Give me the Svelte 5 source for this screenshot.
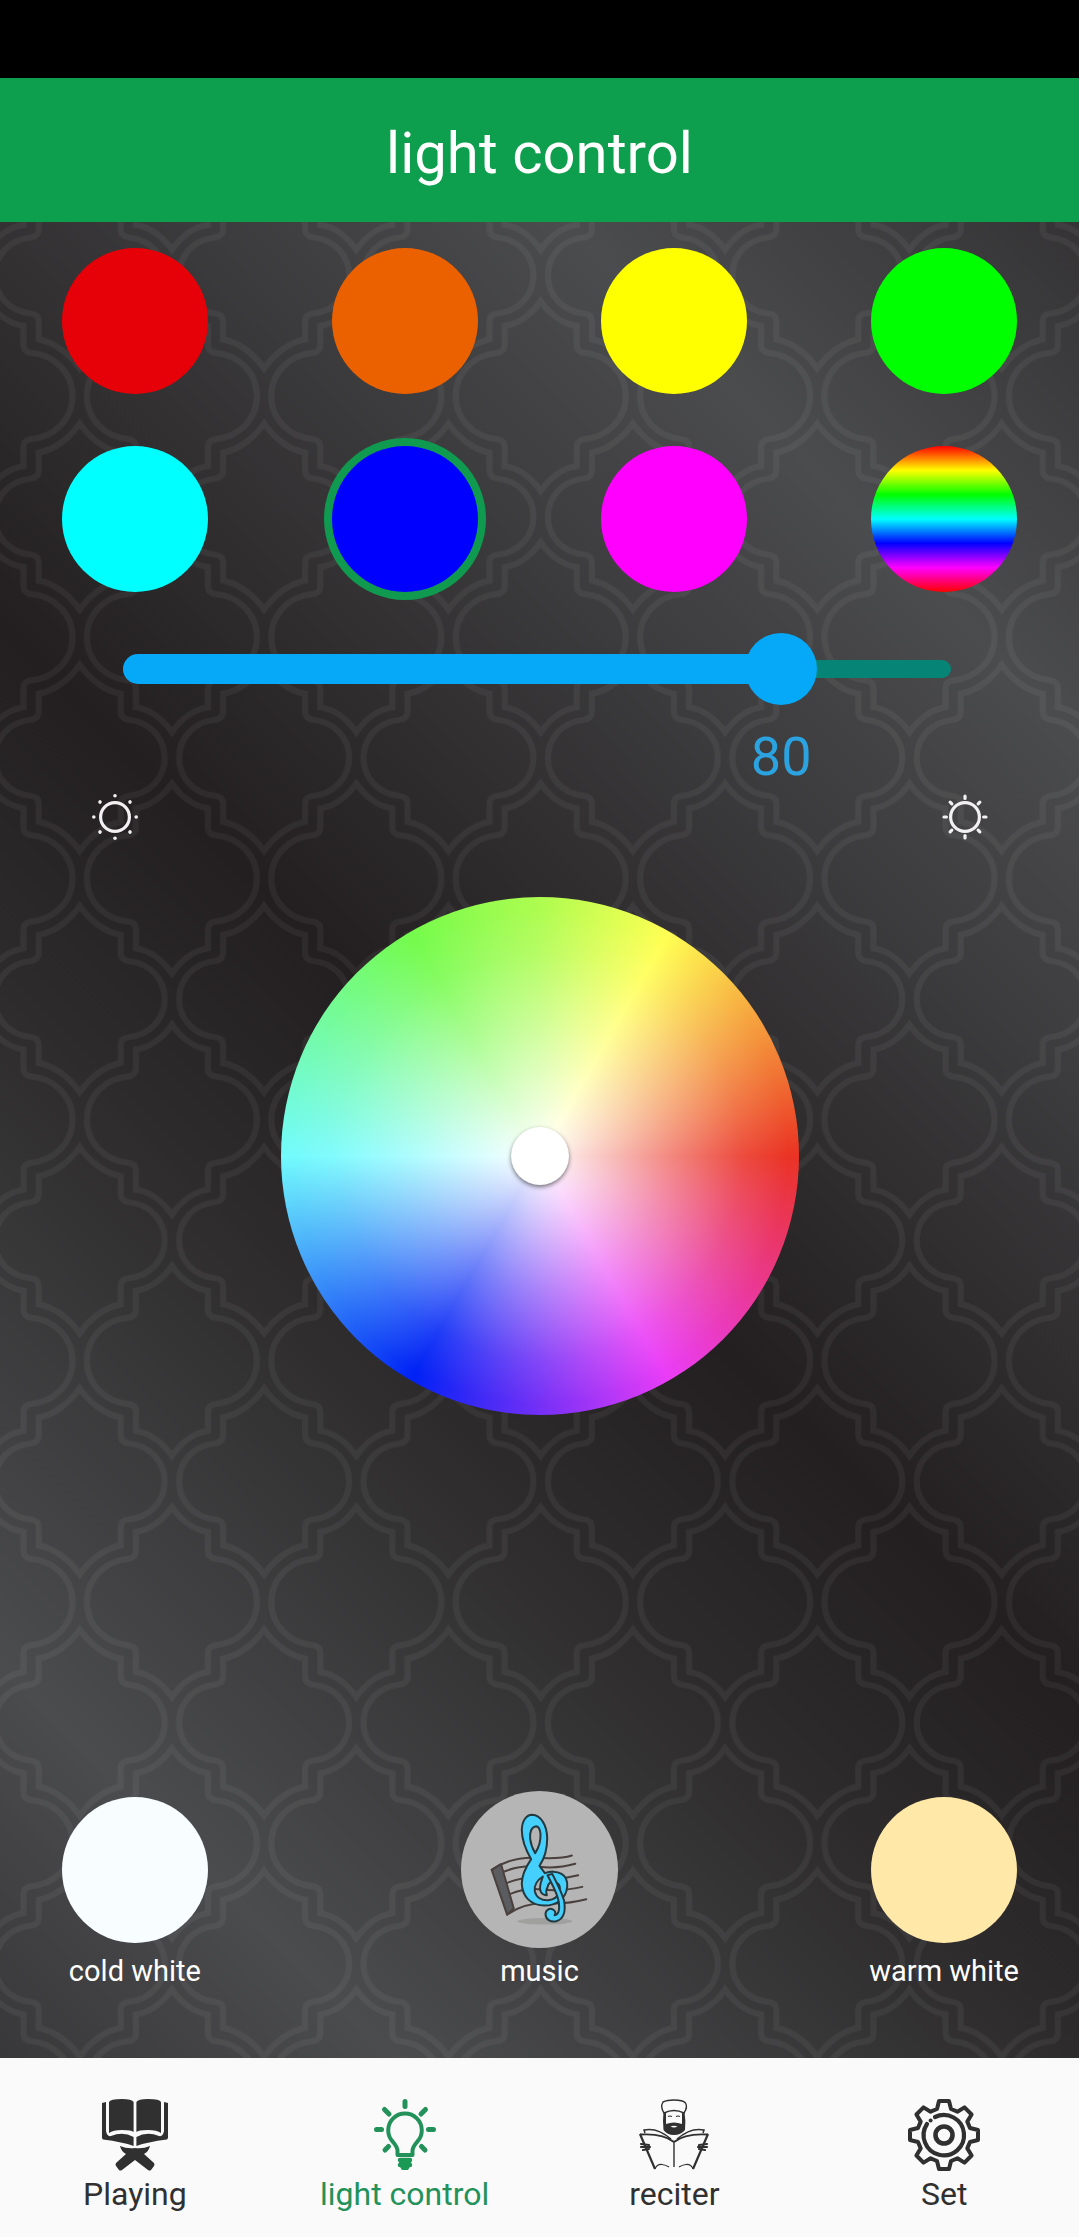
<script lang="ts">
  const colors = [
    { name: 'red', value: '#e60008' },
    { name: 'orange', value: '#eb6100' },
    { name: 'yellow', value: '#ffff00' },
    { name: 'green', value: '#00ff00' },
    { name: 'cyan', value: '#00ffff' },
    { name: 'blue', value: '#0000ff' },
    { name: 'magenta', value: '#ff00ff' },
    { name: 'rainbow', value: 'linear-gradient(#f00, #ff0, #0f0, #0ff, #00f, #f0f, #f00)' }
  ];

  let selected = $state('blue');
  let brightness = $state(80);

  const rays = [0, 45, 90, 135, 180, 225, 270, 315];

  // closed outline of the settings gear, one tooth per ray
  function gearPath() {
    const tooth = [[-7, -26], [-5, -34], [5, -34], [7, -26]];
    const points = rays.flatMap((deg) => {
      const a = (deg * Math.PI) / 180;
      return tooth.map(([x, y]) => {
        const px = 36 + x * Math.cos(a) - y * Math.sin(a);
        const py = 36 + x * Math.sin(a) + y * Math.cos(a);
        return `${px.toFixed(1)} ${py.toFixed(1)}`;
      });
    });
    return `M${points.join('L')}Z`;
  }
</script>

<div class="screen">
  <div class="status-bar"></div>

  <header>
    <h1>light control</h1>
  </header>

  <main>
    <svg class="backdrop" viewBox="0 0 1079 1836" preserveAspectRatio="xMidYMid slice" aria-hidden="true">
      <defs>
        <linearGradient id="shade" gradientUnits="userSpaceOnUse" x1="-1150" y1="1150" x2="750" y2="-750">
          <stop offset="0" stop-color="#231f20" />
          <stop offset="0.226" stop-color="#4b4c4e" />
          <stop offset="0.406" stop-color="#2d2b2c" />
          <stop offset="0.5" stop-color="#231f20" />
          <stop offset="0.754" stop-color="#4b4c4e" />
          <stop offset="1" stop-color="#231f20" />
        </linearGradient>
        <path id="tile-a" d="M0-95C9-82 22-72 36-70V-51Q36-44 44-43C66-41 85-24 85 0C85 24 66 41 44 43Q36 44 36 51V70C22 72 9 82 0 95C-9 82-22 72-36 70V51Q-36 44-44 43C-66 41-85 24-85 0C-85-24-66-41-44-43Q-36-44-36-51V-70C-22-72-9-82 0-95Z" />
        <path id="tile-b" d="M0-93C9-80 24-67 41-64V-46Q41-39 49-38C70-36 85-20 85 0C85 20 70 36 49 38Q41 39 41 46V64C24 67 9 80 0 93C-9 80-24 67-41 64V46Q-41 39-49 38C-70 36-85 20-85 0C-85-20-70-36-49-38Q-41-39-41-46V-64C-24-67-9-80 0-93Z" />
        <pattern id="lattice" patternUnits="userSpaceOnUse" x="79.7" y="53.4" width="184.4" height="241.2">
          <g fill="none" stroke="#fff" stroke-opacity="0.05" stroke-width="6">
            <use href="#tile-a" x="92.2" y="120.6" />
            <use href="#tile-b" x="0" y="0" />
            <use href="#tile-b" x="184.4" y="0" />
            <use href="#tile-b" x="0" y="241.2" />
            <use href="#tile-b" x="184.4" y="241.2" />
          </g>
        </pattern>
      </defs>
      <rect width="1079" height="1836" fill="url(#shade)" />
      <rect width="1079" height="1836" fill="url(#lattice)" />
    </svg>

    <section class="swatches">
      {#each colors as color (color.name)}
        <button
          class="swatch"
          class:selected={selected === color.name}
          style="background: {color.value}"
          aria-label={color.name}
          onclick={() => (selected = color.name)}
        ></button>
      {/each}
    </section>

    <section class="brightness">
      <div class="slider">
        <div class="track"></div>
        <div class="fill-area"><div class="fill" style="width: {brightness}%"></div></div>
        <input type="range" min="0" max="100" aria-label="brightness" bind:value={brightness} />
      </div>
      <div class="value-area">
        <div class="value" style="width: {brightness}%"><output>{brightness}</output></div>
      </div>
    </section>

    <div class="suns">
      <svg viewBox="0 0 48 48" aria-hidden="true">
        <circle cx="24" cy="24" r="14.4" fill="none" stroke="#f2f0f2" stroke-width="3.2" />
        {#each rays as deg}
          <circle cx="24" cy="2.8" r="1.8" fill="#f2f0f2" transform="rotate({deg} 24 24)" />
        {/each}
      </svg>
      <svg viewBox="0 0 48 48" aria-hidden="true">
        <g fill="none" stroke="#f2f0f2" stroke-width="3.2" stroke-linecap="round">
          <circle cx="24" cy="24" r="14.4" />
          {#each rays as deg}
            <path d="M24 5.4V3" transform="rotate({deg} 24 24)" />
          {/each}
        </g>
      </svg>
    </div>

    <div class="wheel">
      <button class="knob" aria-label="pick color"></button>
    </div>

    <section class="presets">
      <button class="preset">
        <span class="disc"><span class="dot cold"></span></span>
        <span>cold white</span>
      </button>
      <button class="preset">
        <span class="disc">
          <svg viewBox="65 62 470 470" aria-hidden="true">
            <circle cx="300" cy="297" r="235" fill="#b5b5b5" />
            <ellipse cx="316" cy="452" rx="82" ry="10" fill="#a0a09f" />
            <g fill="none" stroke="#4a413e" stroke-width="6" stroke-linecap="round">
              <path d="M157 298Q215 258 290 262T397 255" />
              <path d="M195 303Q245 283 300 289T407 280" />
              <path d="M203 337Q250 317 305 323T416 314" />
              <path d="M213 370Q260 350 310 357T428 349" />
              <path d="M203 432Q255 395 320 398T440 386" />
              <path d="M157 298L185 281L223 414L203 432Z" fill="#5b5c5f" stroke-linejoin="round" />
            </g>
            <!-- treble clef: body with its two holes, then the stem and hook over it -->
            <g fill="#45cffc" stroke="#23393f" stroke-width="6" stroke-linecap="round" stroke-linejoin="round">
              <path
                fill-rule="evenodd"
                d="M275 266C254 230 247 200 247 178C248 150 261 133 278 133C304 134 323 165 323 205C323 245 312 268 300 286L316 308C330 302 352 301 366 310C380 318 384 334 383 348C380 385 350 405 315 405C275 404 249 380 247 340C247 310 260 288 275 266ZM287 248C299 230 304 212 303 190C301 174 296 167 288 168C276 170 270 186 272 205C274 222 279 235 287 248ZM310 318C294 328 283 345 286 362C290 380 306 390 326 389C345 387 355 378 360 364C364 350 360 338 345 335C332 333 326 340 324 350C320 358 318 364 322 374C306 374 299 362 302 346C304 332 308 326 310 318Z"
              />
              <path d="M324 314L338 310C350 334 366 362 374 392C379 425 370 446 350 452C333 456 318 446 318 431C318 418 330 411 341 417C348 421 349 429 345 434C357 433 361 418 358 396C354 368 338 342 324 314Z" />
            </g>
          </svg>
        </span>
        <span>music</span>
      </button>
      <button class="preset">
        <span class="disc"><span class="dot warm"></span></span>
        <span>warm white</span>
      </button>
    </section>
  </main>

  <nav>
    <a href="#playing">
      <svg viewBox="0 0 72 72" fill="#303030" aria-hidden="true">
        <path d="M10 3Q11 0 23 0Q33 0 34.6 3V33Q33 31 23 31Q14 31 10 34Z" />
        <path d="M62 3Q61 0 49 0Q39 0 37.4 3V33Q39 31 49 31Q58 31 62 34Z" />
        <path d="M3 4L7 3V32Q8 38 12 37Q24 32 34.6 38V47Q24 43 4 40.5L3 39Z" />
        <path d="M69 4L65 3V32Q64 38 60 37Q48 32 37.4 38V47Q48 43 68 40.5L69 39Z" />
        <path d="M21 47Q28 50 36 49Q44 50 51 47Q50 52 45 55L55 64Q56 66 55 67L52 71Q51 72 49 71L36 61L23 71Q21 72 20 71L17 67Q16 66 17 64L27 55Q22 52 21 47Z" />
      </svg>
      <span>Playing</span>
    </a>
    <a href="#light" class="active" aria-current="page">
      <svg viewBox="0 0 72 72" fill="none" stroke="#23925a" stroke-linecap="round" aria-hidden="true">
        <path d="M28.5 56V52Q28.5 48 24 43A16.8 16.8 0 1 1 48 43Q43.5 48 43.5 52V56Z" stroke-width="4" stroke-linejoin="round" />
        <path d="M36 2.500V7.500M15.500 10.500L20 15M56.500 10.500L52 15M7.500 30.500H12.500M59.500 30.500H64.500M19.500 47.500L16 51M52.500 47.500L56 51" stroke-width="5" />
        <path d="M31 61H41M31 66H41" stroke-width="4.500" />
        <path d="M30 60H42V66L39 71H33L30 66Z" fill="#1a9a55" stroke="none" />
      </svg>
      <span>light control</span>
    </a>
    <a href="#reciter">
      <svg viewBox="0 0 72 72" fill="none" stroke="#303030" aria-hidden="true">
        <path d="M26 14Q22 8 25 3Q29 1 36 1Q45 1 47.500 4Q50 8 46 14Q36 9 26 14Z" stroke-width="1.400" />
        <path d="M25.500 13L28 13V25Q36 22 44 25V13L46.500 13Q48 22 47 31Q43 36 36 36Q29 36 25.500 31Q24.500 22 25.500 13Z" fill="#303030" stroke="none" />
        <path d="M32.500 27.500Q36 26 39.500 27.500Q36 29.500 32.500 27.500Z" fill="#fafafa" stroke="none" />
        <path d="M30 17.500Q32 16.500 34 17.500M38 17.500Q40 16.500 42 17.500" stroke-width="1.200" />
        <path d="M36 43V68" stroke-width="1.400" />
        <path d="M36 43Q25 34 2 35.500M36 43Q47 34 70 35.500" stroke-width="1.800" />
        <path d="M17 70Q19 65 24 65.500Q28 66 31 68M55 70Q53 65 48 65.500Q44 66 41 68" stroke-width="1.200" />
        <path d="M2 35L17 70M70 35L55 70" stroke-width="2.200" />
        <path d="M7 34L6 31Q19 28 33 40M65 34L66 31Q53 28 39 40" stroke-width="1.500" />
        <path d="M3 45L11 46M3 48L12 48M5 51L11 50M69 45L61 46M69 48L60 48M67 51L61 50" stroke-width="2.200" stroke-linecap="round" />
      </svg>
      <span>reciter</span>
    </a>
    <a href="#set">
      <svg viewBox="0 0 72 72" fill="none" stroke="#303030" aria-hidden="true">
        <path d={gearPath()} stroke-width="4" stroke-linejoin="round" />
        <path d="M27 18A20.200 20.200 0 1 1 19 25" stroke-width="4.200" stroke-linecap="round" />
        <circle cx="22.600" cy="21.400" r="2" fill="#303030" stroke="none" />
        <circle cx="36" cy="36" r="8.500" stroke-width="4.600" />
      </svg>
      <span>Set</span>
    </a>
  </nav>
</div>

<style>
  :global(body) {
    margin: 0;
  }

  .screen {
    display: flex;
    flex-direction: column;
    min-height: 100vh;
    font-family: Roboto, 'Liberation Sans', sans-serif;
    background: #231f20;
  }

  button {
    padding: 0;
    border: none;
    background: none;
    font: inherit;
    cursor: pointer;
  }

  .status-bar {
    height: 78px;
    background: #000;
  }

  header {
    box-sizing: border-box;
    height: 144px;
    padding-top: 6px;
    display: flex;
    align-items: center;
    justify-content: center;
    background: #0d9e4e;
  }

  h1 {
    margin: 0;
    font-size: 58px;
    font-weight: 400;
    color: #fff;
  }

  main {
    flex: 1;
    display: flex;
    flex-direction: column;
    position: relative;
    isolation: isolate;
    padding: 26px 0 69px;
  }

  .backdrop {
    position: absolute;
    inset: 0;
    width: 100%;
    height: 100%;
    z-index: -1;
  }

  .swatches {
    display: grid;
    grid-template-columns: repeat(4, 1fr);
    justify-items: center;
    row-gap: 52px;
  }

  .swatch {
    width: 146px;
    height: 146px;
    border-radius: 50%;
  }

  .swatch.selected {
    box-shadow: 0 0 0 8px #109a50;
  }

  .brightness {
    margin: 41px 101px 0 102px;
  }

  .slider {
    display: grid;
    align-items: center;
    height: 72px;
  }

  .slider > * {
    grid-area: 1 / 1;
  }

  .track {
    height: 18px;
    margin: 0 27px 0 21px;
    border-radius: 9px;
    background: #068577;
  }

  .fill-area {
    margin: 0 36px 0 21px;
  }

  .fill {
    height: 30px;
    border-radius: 15px 0 0 15px;
    background: #05a9f7;
  }

  input {
    appearance: none;
    width: 100%;
    height: 72px;
    margin: 0;
    background: transparent;
  }

  input::-webkit-slider-thumb {
    appearance: none;
    width: 72px;
    height: 72px;
    border-radius: 50%;
    background: #05a9f7;
  }

  .value-area {
    margin: 20px 36px 0;
  }

  .value {
    display: flex;
    justify-content: flex-end;
  }

  output {
    flex: none;
    width: 96px;
    margin-right: -48px;
    font-size: 54px;
    line-height: 64px;
    text-align: center;
    color: #2ba3e0;
  }

  .suns {
    display: flex;
    justify-content: space-between;
    margin: 4px 90px 0 91px;
  }

  .suns svg {
    width: 48px;
    height: 48px;
  }

  .wheel {
    display: flex;
    align-items: center;
    justify-content: center;
    align-self: center;
    width: 518px;
    height: 518px;
    margin: 56px 0;
    border-radius: 50%;
    background:
      radial-gradient(closest-side, #fff, rgba(255, 255, 255, 0.42) 50%, rgba(255, 255, 255, 0.12) 78%, rgba(255, 255, 255, 0) 96%),
      conic-gradient(#aefc50, #ffff54 30deg, #ea3324 90deg, #ea3df7 150deg, #0022f5 210deg, #73fbfd 270deg, #75fb4c 330deg, #aefc50);
  }

  .knob {
    width: 58px;
    height: 58px;
    border-radius: 50%;
    background: #fff;
    box-shadow: 0 2px 4px rgba(0, 0, 0, 0.5);
  }

  .presets {
    display: flex;
    justify-content: space-between;
    margin-top: auto;
  }

  .preset {
    display: flex;
    flex-direction: column;
    align-items: center;
    gap: 5px;
    width: 25%;
    font-size: 29px;
    line-height: 36px;
    color: #fff;
  }

  .disc {
    display: flex;
    align-items: center;
    justify-content: center;
    width: 157px;
    height: 157px;
  }

  .disc svg {
    width: 100%;
    height: 100%;
  }

  .dot {
    width: 146px;
    height: 146px;
    border-radius: 50%;
  }

  .cold {
    background: #f8fdff;
  }

  .warm {
    background: #ffe8a8;
  }

  nav {
    display: flex;
    padding: 41px 0 23px;
    background: #fafafa;
  }

  nav a {
    flex: 1;
    display: flex;
    flex-direction: column;
    align-items: center;
    gap: 3px;
    font-size: 32px;
    line-height: 40px;
    color: #303030;
    text-decoration: none;
  }

  nav a.active {
    color: #23925a;
  }

  nav svg {
    width: 72px;
    height: 72px;
  }
</style>
